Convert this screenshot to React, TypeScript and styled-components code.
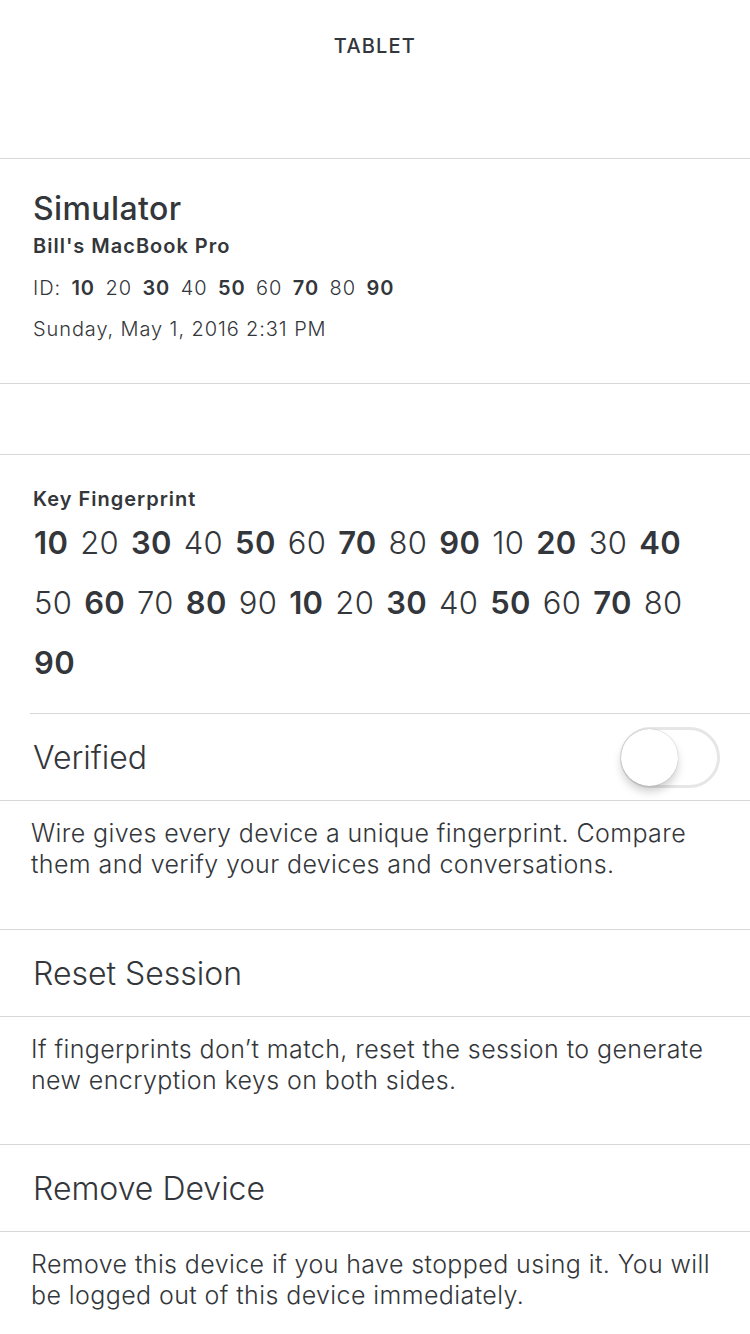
import styled, { createGlobalStyle } from "styled-components"

const Global = createGlobalStyle`
  html, body {
    margin: 0;
    padding: 0;
    background: #ffffff;
  }
  body {
    font-family: "Inter", "Roboto", "Noto Sans", sans-serif;
    color: #33363a;
    -webkit-font-smoothing: antialiased;
  }
`

const Page = styled.div`
  width: 750px;
  min-height: 1334px;
  background: #fff;
`

const Divider = styled.div<{ $inset?: number }>`
  height: 1px;
  background: #d5d9da;
  margin-left: ${p => p.$inset ?? 0}px;
`

const TopBar = styled.header`
  height: 158px;
  box-sizing: border-box;
  padding-top: 34px;
  text-align: center;
  font-size: 20px;
  line-height: 24px;
  font-weight: 500;
  letter-spacing: 1.2px;
`

const DeviceInfo = styled.section`
  height: 224px;
  box-sizing: border-box;
  padding: 30px 33px 0;
`

const Title = styled.div`
  font-size: 32px;
  font-weight: 500;
  line-height: 40px;
  letter-spacing: 0.4px;
`

const SubTitle = styled.div`
  font-size: 20px;
  font-weight: 600;
  line-height: 24px;
  letter-spacing: 1px;
  margin-top: 5px;
`

const MetaLine = styled.div<{ $mt: number; $ws?: number }>`
  font-size: 20px;
  font-weight: 300;
  line-height: 24px;
  letter-spacing: 0.9px;
  word-spacing: ${p => p.$ws ?? 0}px;
  margin-top: ${p => p.$mt}px;

  b {
    font-weight: 600;
  }
`

const Spacer = styled.div`
  height: 70px;
`

const Fingerprint = styled.section`
  height: 258px;
  box-sizing: border-box;
  padding: 32px 30px 0 34px;
`

const Label = styled.div`
  font-size: 20px;
  font-weight: 600;
  line-height: 24px;
  letter-spacing: 1px;
  margin-left: -1px;
`

const KeyText = styled.div`
  font-size: 31px;
  font-weight: 300;
  line-height: 60px;
  letter-spacing: 0.3px;
  word-spacing: 3px;
  margin-top: 2px;

  b {
    font-weight: 600;
  }
`

const ActionRow = styled.div`
  height: 86px;
  box-sizing: border-box;
  display: flex;
  align-items: center;
  justify-content: space-between;
  padding: 0 30px 0 33px;
`

const ActionLabel = styled.div`
  font-size: 32px;
  font-weight: 300;
`

const Note = styled.p<{ $h?: number }>`
  margin: 0;
  height: ${p => (p.$h ? `${p.$h}px` : "auto")};
  box-sizing: border-box;
  padding: 17px 30px 0 31px;
  font-size: 25px;
  font-weight: 300;
  line-height: 31px;
  letter-spacing: 0.4px;
`

const Track = styled.div`
  width: 100px;
  height: 61px;
  border-radius: 31px;
  border: 3px solid #e6e6e6;
  box-sizing: border-box;
  background: #fff;
  position: relative;
`

const Knob = styled.div`
  position: absolute;
  top: -1px;
  left: -2px;
  width: 57px;
  height: 57px;
  border-radius: 50%;
  background: #fff;
  box-shadow: 0 6px 8px rgba(0, 0, 0, 0.18), 0 0 1px rgba(0, 0, 0, 0.35);
`

const idKeys = [10, 20, 30, 40, 50, 60, 70, 80, 90]
const fingerprint = [...idKeys, ...idKeys, ...idKeys].slice(0, 27)

function Numbers({ values }: { values: number[] }) {
  return (
    <>
      {values.map((k, i) => (
        <span key={i}>
          {i % 2 === 0 ? <b>{k}</b> : k}
          {i < values.length - 1 ? " " : ""}
        </span>
      ))}
    </>
  )
}

export default function App() {
  return (
    <Page>
      <Global />
      <TopBar>TABLET</TopBar>
      <Divider />

      <DeviceInfo>
        <Title>Simulator</Title>
        <SubTitle>Bill's MacBook Pro</SubTitle>
        <MetaLine $mt={18} $ws={4}>
          ID: <Numbers values={idKeys} />
        </MetaLine>
        <MetaLine $mt={17}>Sunday, May 1, 2016 2:31 PM</MetaLine>
      </DeviceInfo>
      <Divider />

      <Spacer />
      <Divider />

      <Fingerprint>
        <Label>Key Fingerprint</Label>
        <KeyText>
          <Numbers values={fingerprint} />
        </KeyText>
      </Fingerprint>
      <Divider $inset={30} />

      <ActionRow>
        <ActionLabel>Verified</ActionLabel>
        <Track>
          <Knob />
        </Track>
      </ActionRow>
      <Divider />
      <Note $h={128}>
        Wire gives every device a unique fingerprint. Compare them and verify your devices and
        conversations.
      </Note>
      <Divider />

      <ActionRow>
        <ActionLabel>Reset Session</ActionLabel>
      </ActionRow>
      <Divider />
      <Note $h={127}>
        If fingerprints don’t match, reset the session to generate new encryption keys on both
        sides.
      </Note>
      <Divider />

      <ActionRow>
        <ActionLabel>Remove Device</ActionLabel>
      </ActionRow>
      <Divider />
      <Note>
        Remove this device if you have stopped using it. You will be logged out of this device
        immediately.
      </Note>
    </Page>
  )
}
